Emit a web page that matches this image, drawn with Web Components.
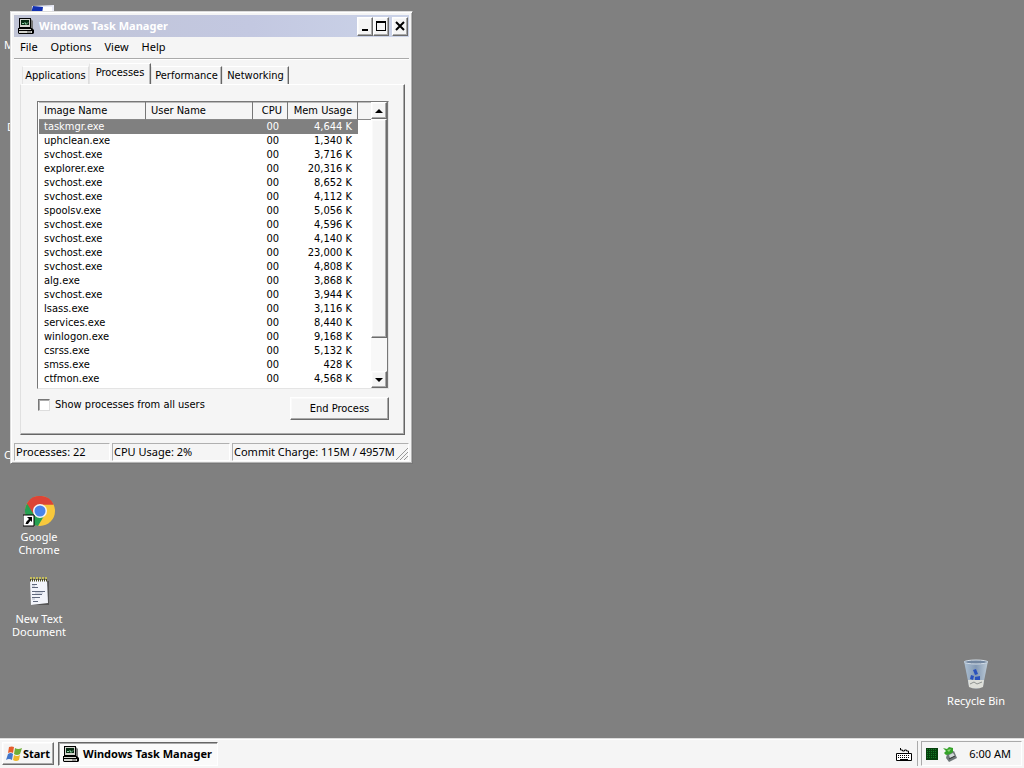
<!DOCTYPE html>
<html lang="en">
<head>
<meta charset="utf-8">
<title>Windows Task Manager</title>
<style>
html,body{margin:0;height:100%}
body{--face:#f5f5f5;--ui:"DejaVu Sans Condensed","DejaVu Sans",sans-serif;font:11px/14px "Noto Sans",sans-serif;color:#000;background:#808080;overflow:hidden}
</style>
</head>
<body>
<xp-desktop>
  <desktop-icon label="M" edge style="left:4px;top:3px"><svg width="52" height="32" viewBox="0 0 52 32"><path d="m28 3 22-1v20H27z" fill="#e8eaf6"/><path d="m29 3 10 1-1 6H27z" fill="#1230b0"/><path d="M39 4h9v4h-9z" fill="#fff"/></svg></desktop-icon>
  <desktop-icon label="D" edge style="left:7px;top:85px"></desktop-icon>
  <desktop-icon label="C" edge style="left:4px;top:413px"></desktop-icon>
  <desktop-icon label="Google Chrome" style="left:-1px;top:495px">
    <svg width="32" height="32" viewBox="0 0 32 32"><circle cx="17" cy="16" r="15" fill="#f8c83c"/><path d="M17 16 4 8.500A15 15 0 0 1 30.500 9.500H17z" fill="#dc4437"/><path d="M4 8.500A15 15 0 0 0 15 31l6-10-4-5z" fill="#26a052"/><path d="M4 8.500 10.500 19 17 9.500h13.500A15 15 0 0 0 4 8.500" fill="#dc4437"/><circle cx="17" cy="16" r="7" fill="#f4f4f4"/><circle cx="17" cy="16" r="5.500" fill="#4a84ea"/><path d="M0 20h11v11H0z" fill="#fff" stroke="#000"/><path d="M4 22h5v5L7.500 25.500 5 29H2.500l1-2.500L6 24z"/></svg>
  </desktop-icon>
  <desktop-icon label="New Text Document" style="left:-1px;top:577px">
    <svg width="32" height="32" viewBox="0 0 32 32"><path d="M8 4h18v24H8z" fill="#555"/><path d="M7 3h17l1 23-17 2z" fill="#f2f4fa"/><path d="M7 3h18" stroke="#4b4a20" stroke-width="3" stroke-dasharray="1 1"/><path d="M7 1h18" stroke="#c4bd5c" stroke-width="2" stroke-dasharray="2 1"/><path d="M9 7.500h5M9 10.500h6M9 14.500h13M9 17.500h10M9 20.500h8M10 24.500h5" stroke="#5f687c"/><path d="M9 9h3M12 16h8M9 22h3" stroke="#b6bccb"/></svg>
  </desktop-icon>
  <desktop-icon label="Recycle Bin" style="right:8px;top:659px">
    <svg width="32" height="32" viewBox="0 0 32 32"><defs><linearGradient id="g"><stop stop-color="#adc0d2"/><stop offset=".5" stop-color="#8399b4"/><stop offset="1" stop-color="#becbd6"/></linearGradient></defs><path d="M4 2h24l-5 25q-7 5-14 0z" fill="url(#g)"/><path d="M8 21h16l-1 7q-7 3-14 0z" fill="#dedfd9"/><path d="m10 25 4-2 3 2 5-2" stroke="#8e9290" fill="none"/><ellipse cx="16" cy="3" rx="11.500" ry="2" fill="#7387a0" stroke="#d4dee8"/><path d="m13 11 3-1 2 5-3 1zM11 16l3 1-1 4-3-1zM15 18l5-1v4h-5z" fill="#2951bd"/></svg>
  </desktop-icon>
  <task-window heading="Windows Task Manager">
    <process-list></process-list>
  </task-window>
  <task-bar slot="bar"></task-bar>
</xp-desktop>

<script>
const PC_ICON = `<svg class="pc" width="16" height="16" viewBox="0 0 16 16" aria-hidden="true"><path d="M1 0h12v10H1z" fill="#000"/><path d="M2 1h10v8H2z" fill="#d4d4ce"/><path d="M3 2h8v5H3z" fill="#062b12"/><path d="M4 5.500h2l1-1 1 2 2-2" stroke="#8fd0a4" fill="none"/><path d="M13 1l2 2v8l-2-1z" fill="#777"/><path d="M0 10h14l2 2v3l-1 1H1l-1-1z" fill="#000"/><path d="M1 11h12v1H1zM1 13h13v2H1z" fill="#d4d4ce"/><path d="M9 14h4" stroke="#555"/></svg>`;

function define(name, html, setup) {
  const template = document.createElement('template');
  template.innerHTML = `<style>:host,*{box-sizing:border-box}button{font:inherit;color:inherit;padding:0;margin:0;border-radius:0}</style>` + html;
  customElements.define(name, class extends HTMLElement {
    connectedCallback() {
      if (this.shadowRoot) return;
      this.attachShadow({mode: 'open'}).append(template.content.cloneNode(true));
      if (setup) setup(this, this.shadowRoot);
    }
  });
}

define('xp-desktop', `
<style>
:host{display:flex;flex-direction:column;height:100vh}
main{flex:1;position:relative;min-height:0}
</style>
<main><slot></slot></main><slot name="bar"></slot>`);

define('desktop-icon', `
<style>
:host{position:absolute;width:80px}
:host([edge]){width:auto}
a{display:flex;flex-direction:column;align-items:center;gap:3px;color:#fff;text-decoration:none;text-align:center;line-height:13px}
.pic{width:32px;height:32px}
.label{width:64px}
:host([edge]) a{align-items:flex-start}
:host([edge]) .label{width:auto}
:host([label="Recycle Bin"]) .label{width:80px}
</style>
<a href="#"><span class="pic"><slot></slot></span><span class="label"></span></a>`,
(host, root) => { root.querySelector('.label').textContent = host.getAttribute('label'); });

define('tool-button', `
<style>
:host{display:block}
button{display:flex;align-items:center;justify-content:center;width:100%;height:100%;background:var(--face);border:1px solid;border-color:#fff #6c6c6c #6c6c6c #fff;box-shadow:inset -1px -1px #aaa,inset 1px 1px #fafafa}
</style>
<button type="button"><slot></slot></button>`,
(host, root) => root.querySelector('button').setAttribute('aria-label', host.getAttribute('name')));

define('task-window', `
<style>
:host{position:absolute;left:10px;top:11px;width:403px;display:flex;flex-direction:column;background:var(--face);border:1px solid;border-color:#dcdcdc #777 #777 #dcdcdc;box-shadow:inset 1px 1px #fff,inset -1px -1px #b4b4b4;padding:3px 3px 2px 3px}
header{display:flex;align-items:center;height:22px;padding:0 1px 0 4px;background:linear-gradient(90deg,#c0c4d6,#c3c8e1 60%,#cbd3e8);color:#fff}
h1{flex:1;margin:0 0 0 5px;font-size:11px;line-height:20px;font-weight:bold}
tool-button{width:16px;height:19px}
header tool-button:last-child{margin-left:3px}
nav{display:flex;gap:13px;height:22px;padding:3px 6px;border-bottom:1px solid #aaa;box-shadow:0 1px #fff}
nav a{color:inherit;text-decoration:none}
.tabs{display:grid;grid-template-columns:67px 62px 71px 67px;align-items:end;height:25px;padding:0 8px;font-family:var(--ui)}
.tabs button{height:18px;background:var(--face);border:1px solid;border-color:#fff #666 transparent #e4e4e4;border-bottom:0;box-shadow:inset -1px 0 #bbb;white-space:nowrap}
.tabs button[aria-selected=true]{height:21px;padding-bottom:2px;position:relative}
.tabs button:first-child{border-right-color:#ddd;box-shadow:none}
.panel{display:flex;flex-direction:column;margin:0 4px 0 6px;padding:16px 15px 14px 16px;border:1px solid;border-color:#fff #666 #666 #e0e0e0;box-shadow:inset -1px -1px #aaa;font-family:var(--ui)}
.actions{display:flex;justify-content:space-between;padding-top:8px}
label{display:flex;align-items:center;gap:5px;height:16px;padding-left:1px}
input{appearance:none;width:12px;height:12px;margin:0;background:#fff;border:1px solid;border-color:#777 #ddd #ddd #777;box-shadow:inset 1px 1px #aaa}
.actions tool-button{width:99px;height:23px}
footer{display:grid;grid-template-columns:96px 118px 1fr;gap:2px;margin-top:8px;height:18px}
footer span{border:1px solid;border-color:#b0b0b0 #fff #fff #b0b0b0;padding:0 1px;line-height:16px;white-space:nowrap}
footer span:last-child{display:flex;justify-content:space-between;align-items:flex-end;padding-right:0}
</style>
<header>${PC_ICON}<h1></h1>
 <tool-button name="Minimize"><svg width="12" height="12"><path d="M3 9h6v2H3z"/></svg></tool-button>
 <tool-button name="Maximize"><svg width="12" height="12"><path d="M1 1h10v10H1zm1 2v7h8V3z" fill-rule="evenodd"/></svg></tool-button>
 <tool-button name="Close"><svg width="12" height="12"><path d="m2 2 8 8m0-8-8 8" stroke="#000" stroke-width="2"/></svg></tool-button>
</header>
<nav><a href="#">File</a><a href="#">Options</a><a href="#">View</a><a href="#">Help</a></nav>
<div class="tabs" role="tablist"><button role="tab">Applications</button><button role="tab" aria-selected="true">Processes</button><button role="tab">Performance</button><button role="tab">Networking</button></div>
<section class="panel"><slot></slot>
 <div class="actions"><label><input type="checkbox">Show processes from all users</label><tool-button name="End Process">End Process</tool-button></div>
</section>
<footer><span>Processes: 22</span><span>CPU Usage: 2%</span><span>Commit Charge: 115M / 4957M<svg width="12" height="12"><path d="m0 12 12-12M4 12l8-8M8 12l4-4" stroke="#999" stroke-width="1"/></svg></span></footer>`,
(host, root) => { root.querySelector('h1').textContent = host.getAttribute('heading'); });

const PROCESSES = [
  ['taskmgr.exe','4,644'],['uphclean.exe','1,340'],['svchost.exe','3,716'],['explorer.exe','20,316'],
  ['svchost.exe','8,652'],['svchost.exe','4,112'],['spoolsv.exe','5,056'],['svchost.exe','4,596'],
  ['svchost.exe','4,140'],['svchost.exe','23,000'],['svchost.exe','4,808'],['alg.exe','3,868'],
  ['svchost.exe','3,944'],['lsass.exe','3,116'],['services.exe','8,440'],['winlogon.exe','9,168'],
  ['csrss.exe','5,132'],['smss.exe','428'],['ctfmon.exe','4,568'],['svchost.exe','5,016']
];
define('process-list', `
<style>
:host{display:flex;height:288px;border:1px solid;border-color:#777 #e4e4e4 #e4e4e4 #777;padding:0 0 0 1px;background:#fff}
.view{flex:1;overflow:hidden}
table{width:100%;table-layout:fixed;border-collapse:separate;border-spacing:0}
th,td{padding:0 5px;text-align:left;font-weight:normal;height:14px;line-height:14px;white-space:nowrap}
th{height:18px;background:var(--face);border-right:1px solid #777;border-bottom:1px solid #888;line-height:17px;box-shadow:inset 0 1px #bbb}
th:last-child{border-right:0}
.num{text-align:right}
td.cpu{padding-right:9px}
td.num:nth-child(4){padding-right:6px}
tr.selected td:not(:last-child){background:#808080;color:#fff}
.scroll{width:17px;display:flex;flex-direction:column;background:#f8f8f8;border-right:1px solid #777}
.scroll tool-button{height:17px;flex:none}
.scroll .thumb{height:219px}
.gap{flex:1}
</style>
<div class="view"><table><colgroup><col style="width:107px"><col style="width:107px"><col style="width:35px"><col style="width:70px"><col></colgroup>
<thead><tr><th>Image Name</th><th>User Name</th><th class="num">CPU</th><th class="num">Mem Usage</th><th></th></tr></thead><tbody></tbody></table></div>
<div class="scroll"><tool-button name="Scroll up"><svg width="8" height="4"><path d="M0 4h8L4 0z"/></svg></tool-button><tool-button class="thumb" name="Scroll thumb"></tool-button><span class="gap"></span><tool-button name="Scroll down"><svg width="8" height="4"><path d="M0 0h8L4 4z"/></svg></tool-button></div>`,
(host, root) => {
  root.querySelector('tbody').innerHTML = PROCESSES.map(([name, mem], i) =>
    `<tr${i ? '' : ' class="selected"'}><td>${name}</td><td></td><td class="num cpu">00</td><td class="num">${mem} K</td><td></td></tr>`).join('');
});

define('task-bar', `
<style>
:host{display:flex;align-items:center;height:30px;flex:none;background:var(--face);border-top:1px solid #ddd;box-shadow:inset 0 1px #fff;padding:0 2px}
.start{width:52px;height:23px;font-weight:bold}
.start svg{margin-right:1px}
.task{display:flex;align-items:center;gap:4px;width:160px;height:24px;margin-left:4px;padding:0 4px;font-weight:bold;background:#fafafa;border:1px solid;border-color:#666 #fff #fff #666;box-shadow:inset 1px 1px #aaa}
.keys{margin-left:auto;margin-right:5px}
.tray{display:flex;align-items:center;height:25px;width:101px;border:1px solid;border-color:#aaa #fff #fff #aaa;padding:0 10px 0 4px}
.split{width:1px;height:25px;background:#aaa;margin-right:3px}
.tray svg+svg{margin-left:4px}
time{margin-left:auto}
</style>
<tool-button class="start" name="Start"><svg width="16" height="16" viewBox="0 0 16 16"><path d="M3 1q3-1 5 0L7 7Q5 5.500 2 7z" fill="#e55d2c"/><path d="M9 2q3 2 7 0l-2 6q-3 2-6 0z" fill="#6fae36"/><path d="M2 8q3-2 5 0l-1 6q-3-2-6 0z" fill="#4377ca"/><path d="M8 9q3 2 6 0l-1 5q-3 2-6 0z" fill="#efb72c"/></svg>Start</tool-button>
<button class="task" type="button">${PC_ICON}Windows Task Manager</button>
<svg class="keys" width="16" height="16"><path d="M.5 7.500h15v7H.5z" fill="#fff" stroke="#000"/><path d="M2 9.500h12M2 11.500h12" stroke="#000" stroke-dasharray="1 1"/><path d="M4 13.500h8M4.500 2v2h2v1h2V4h2v1h2v2" stroke="#000" fill="none"/></svg>
<span class="split"></span>
<div class="tray"><svg width="12" height="12"><path d="M0 0h12v12H0z" fill="#063f0c"/><path d="M1 1.500h10M1 3.500h10M1 5.500h10M1 7.500h10M1 9.500h10" stroke="#127a25" stroke-dasharray="1 1"/></svg>
<svg width="16" height="16"><path d="m5 8 7-3 3 7-8 4-3-4z" fill="#6f7779"/><path d="m7 9 4-2 2 3-5 2z" fill="#d1dad9"/><path d="m7 13 6-3" stroke="#333"/><path d="m1 2 4 1 2-2 4 1v4L8 8 4 9 2 7l2-2z" fill="#35a329"/><path d="m5 4 4-1-2 3z" fill="#8fd475"/></svg>
<time>6:00 AM</time></div>`);
</script>
</body>
</html>
